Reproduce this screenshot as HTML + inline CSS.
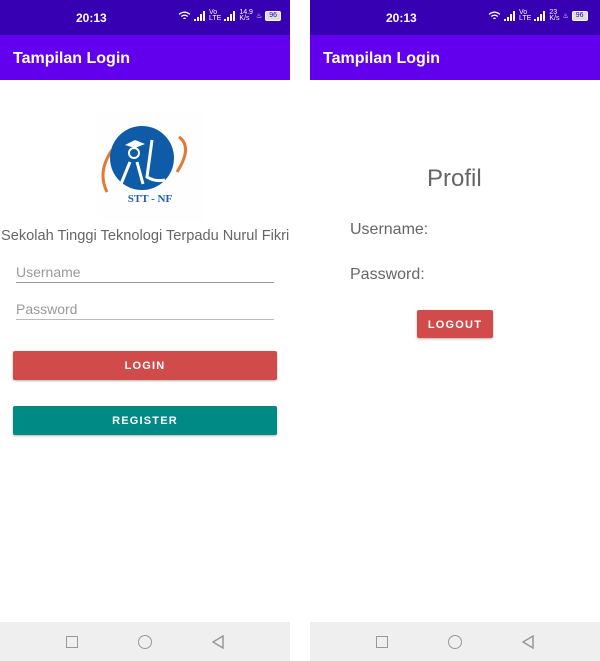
<!DOCTYPE html>
<html><head><meta charset="utf-8">
<style>
*{margin:0;padding:0;box-sizing:border-box}
body{width:600px;height:661px;background:#fff;position:relative;overflow:hidden;font-family:"Liberation Sans",sans-serif}
.ph{position:absolute;top:0;width:290px;height:661px;background:#fff}
.sb{position:absolute;left:0;top:0;width:290px;height:35px;background:#3700b3;color:#fff}
.sb .t{position:absolute;left:76px;top:11px;font-size:12px;font-weight:bold}
.sb .ic{position:absolute;left:178px;top:10px;font-size:7px;color:#fff;display:flex;gap:3px;align-items:center}
.ab{position:absolute;left:0;top:35px;width:290px;height:45px;background:#6200ee;color:#fff;font-size:16px;font-weight:bold;padding:15px 0 0 13px}
.nav{position:absolute;left:0;top:622px;width:290px;height:39px;background:#efefef}
.abs{position:absolute}
.btn{position:absolute;color:#fff;font-size:11px;font-weight:bold;letter-spacing:1.2px;text-align:center;border-radius:2px;box-shadow:0 1px 2px rgba(0,0,0,.3)}
.lbl{position:absolute;color:#999;font-size:14px}
.ln{position:absolute;height:1px;background:#999}
.g{color:#666}
</style></head><body>
<div class="ph" style="left:0">
 <div class="sb"><div class="t">20:13</div>
  <div class="ic">
   <svg width="13" height="10" viewBox="0 0 12 9"><path d="M1 3Q6 -1 11 3M3 5Q6 2.5 9 5M5 7Q6 6 7 7" stroke="#fff" stroke-width="1.2" fill="none"/></svg>
   <svg width="12" height="10"><rect x="0" y="8" width="2" height="2" fill="#fff"/><rect x="3" y="6" width="2" height="4" fill="#fff"/><rect x="6" y="3" width="2" height="7" fill="#fff"/><rect x="9" y="0" width="2" height="10" fill="#fff"/></svg>
   <span style="line-height:6px">Vo<br>LTE</span>
   <svg width="12" height="10"><rect x="0" y="8" width="2" height="2" fill="#fff"/><rect x="3" y="6" width="2" height="4" fill="#fff"/><rect x="6" y="3" width="2" height="7" fill="#fff"/><rect x="9" y="0" width="2" height="10" fill="#fff"/></svg>
   <span style="line-height:6px">14.9<br>K/s</span>
   <span>♨</span>
   <span style="border:1px solid #fff;border-radius:2px;padding:0 3px;background:#ddd;color:#3700b3;line-height:8px">96</span>
  </div></div>
 <div class="ab">Tampilan Login</div>
 <svg class="abs" style="left:97px;top:112px" width="106" height="110" viewBox="0 0 106 110">
  <rect width="106" height="110" fill="#fefefe"/>
  <path d="M10 80 Q0 60 15 38" stroke="#e07a35" stroke-width="3" fill="none"/>
  <path d="M82 25 Q96 35 80 60" stroke="#e07a35" stroke-width="3" fill="none"/>
  <circle cx="45" cy="46" r="32" fill="#0e5ba8"/>
  <path d="M28 33 L38 28 L48 32 L38 36Z" fill="#fff"/>
  <circle cx="37" cy="41" r="5" fill="none" stroke="#fff" stroke-width="2"/>
  <path d="M33 50 L24 72 M40 50 L46 72 M55 28 L50 65 Q58 70 68 68" stroke="#fff" stroke-width="3" fill="none"/>
  <text x="53" y="90" text-anchor="middle" font-family="Liberation Serif,serif" font-weight="bold" font-size="11" fill="#1d5fa8">STT - NF</text>
 </svg>
 <div class="abs g" style="left:1px;top:228px;font-size:14.6px;white-space:nowrap">Sekolah Tinggi Teknologi Terpadu Nurul Fikri</div>
 <div class="lbl" style="left:16px;top:264px">Username</div>
 <div class="ln" style="left:16px;top:282px;width:258px"></div>
 <div class="lbl" style="left:16px;top:301px">Password</div>
 <div class="ln" style="left:16px;top:319px;width:258px;background:#bbb"></div>
 <div class="btn" style="left:13px;top:351px;width:264px;height:29px;line-height:31px;background:#d14b4b">LOGIN</div>
 <div class="btn" style="left:13px;top:406px;width:264px;height:29px;line-height:31px;background:#008a85">REGISTER</div>
 <div class="nav">
  <div class="abs" style="left:66px;top:14px;width:12px;height:12px;border:1.5px solid #999"></div>
  <div class="abs" style="left:138px;top:13px;width:14px;height:14px;border:1.5px solid #999;border-radius:50%"></div>
  <svg class="abs" style="left:212px;top:13px" width="12" height="14"><path d="M11 1 L1 7 L11 13Z" stroke="#999" stroke-width="1.5" fill="none"/></svg>
 </div>
</div>
<div class="ph" style="left:310px">
 <div class="sb"><div class="t">20:13</div>
  <div class="ic">
   <svg width="13" height="10" viewBox="0 0 12 9"><path d="M1 3Q6 -1 11 3M3 5Q6 2.5 9 5M5 7Q6 6 7 7" stroke="#fff" stroke-width="1.2" fill="none"/></svg>
   <svg width="12" height="10"><rect x="0" y="8" width="2" height="2" fill="#fff"/><rect x="3" y="6" width="2" height="4" fill="#fff"/><rect x="6" y="3" width="2" height="7" fill="#fff"/><rect x="9" y="0" width="2" height="10" fill="#fff"/></svg>
   <span style="line-height:6px">Vo<br>LTE</span>
   <svg width="12" height="10"><rect x="0" y="8" width="2" height="2" fill="#fff"/><rect x="3" y="6" width="2" height="4" fill="#fff"/><rect x="6" y="3" width="2" height="7" fill="#fff"/><rect x="9" y="0" width="2" height="10" fill="#fff"/></svg>
   <span style="line-height:6px">23<br>K/s</span>
   <span>♨</span>
   <span style="border:1px solid #fff;border-radius:2px;padding:0 3px;background:#ddd;color:#3700b3;line-height:8px">96</span>
  </div></div>
 <div class="ab">Tampilan Login</div>
 <div class="abs g" style="left:117px;top:165px;font-size:24px">Profil</div>
 <div class="abs g" style="left:40px;top:221px;font-size:16px">Username:</div>
 <div class="abs g" style="left:40px;top:266px;font-size:16px">Password:</div>
 <div class="btn" style="left:107px;top:310px;width:76px;height:28px;line-height:30px;background:#d14b4b">LOGOUT</div>
 <div class="nav">
  <div class="abs" style="left:66px;top:14px;width:12px;height:12px;border:1.5px solid #999"></div>
  <div class="abs" style="left:138px;top:13px;width:14px;height:14px;border:1.5px solid #999;border-radius:50%"></div>
  <svg class="abs" style="left:212px;top:13px" width="12" height="14"><path d="M11 1 L1 7 L11 13Z" stroke="#999" stroke-width="1.5" fill="none"/></svg>
 </div>
</div>
</body></html>
